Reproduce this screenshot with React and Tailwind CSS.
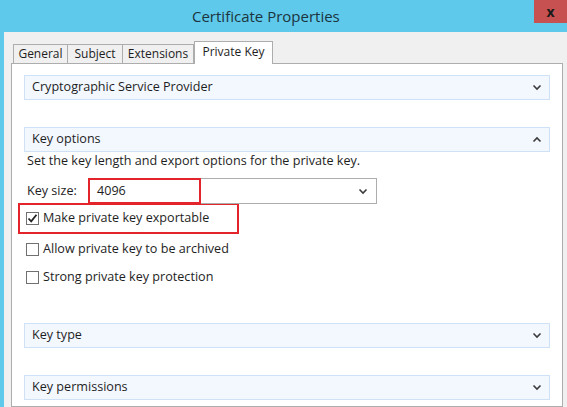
import React from "react";

const font = { fontFamily: '"Open Sans", "Noto Sans", "Liberation Sans", sans-serif' };

function Chevron({ up = false }) {
  return (
    <svg width="10" height="7" viewBox="0 0 10 7" className="shrink-0">
      <path
        d={up ? "M1.5 5.5 L5 2 L8.5 5.5" : "M1.5 1.5 L5 5 L8.5 1.5"}
        fill="none"
        stroke="#3a3a3a"
        strokeWidth="1.6"
      />
    </svg>
  );
}

function Section({ title, up = false }) {
  return (
    <div className="flex h-[25px] items-center justify-between border border-[#cfe1f7] bg-[#f3f8fe] pl-[7px] pr-[7px] text-[12.6px] text-[#1e1e1e]">
      <span>{title}</span>
      <Chevron up={up} />
    </div>
  );
}

function Check({ checked = false, label }) {
  return (
    <div className="flex h-[14px] items-center gap-[4px] text-[12.6px] text-[#1e1e1e]">
      <span className="flex h-[13px] w-[13px] items-center justify-center border border-[#707070] bg-white">
        {checked ? (
          <svg width="11" height="11" viewBox="0 0 11 11">
            <path d="M1.5 5.5 L4.2 8.3 L9.5 1.8" fill="none" stroke="#222" strokeWidth="1.8" />
          </svg>
        ) : null}
      </span>
      <span>{label}</span>
    </div>
  );
}

function Tab({ label, width, active = false }) {
  if (active) {
    return (
      <div
        className={`relative z-10 -mb-px flex h-[23px] items-center justify-center border border-b-0 border-[#adadad] bg-white pb-[2px] text-[12px] text-[#1e1e1e] ${width}`}
      >
        {label}
      </div>
    );
  }
  return (
    <div
      className={`flex h-[19px] items-center justify-center border border-b-0 border-l-0 border-[#adadad] bg-[#f0f0f0] text-[12px] text-[#1e1e1e] first:border-l ${width}`}
    >
      {label}
    </div>
  );
}

export default function App() {
  return (
    <div className="relative flex h-[407px] w-[567px] flex-col overflow-hidden bg-[#5ec9ea]" style={font}>
      <div className="flex h-[32px] shrink-0 items-center pl-[192px] text-[15px] text-[#1c3440]">
        Certificate Properties
      </div>
      <div className="absolute right-0 top-0 flex h-[23px] w-[33px] items-center justify-center bg-[#c75050] text-[14px] font-bold text-[#1a1a1a]">
        x
      </div>

      <div className="ml-[4px] flex flex-1 flex-col bg-[#f0f0f0] pl-[7px] pr-[4px] pt-[9px]">
        <div className="flex items-end pl-[2px]">
          <Tab label="General" width="w-[55px]" />
          <Tab label="Subject" width="w-[55px]" />
          <Tab label="Extensions" width="w-[71px]" />
          <Tab label="Private Key" width="w-[79px]" active />
        </div>

        <div className="flex flex-1 flex-col border border-[#adadad] bg-white px-[12px] pt-[11px]">
          <Section title="Cryptographic Service Provider" />

          <div className="mt-[27px]">
            <Section title="Key options" up />
          </div>

          <div className="mt-[1px] pl-[3px] text-[12.6px] leading-[16px] text-[#1e1e1e]">
            Set the key length and export options for the private key.
          </div>

          <div className="mt-[9px] flex items-center pl-[3px]">
            <span className="w-[61px] text-[12.6px] text-[#1e1e1e]">Key size:</span>
            <div className="relative flex h-[26px] w-[289px] items-center justify-between border border-[#adadad] bg-white pl-[8px] pr-[8px] text-[12.6px] text-[#1e1e1e]">
              <span>4096</span>
              <Chevron />
              <div className="absolute -left-px -top-px h-[26px] w-[113px] border-2 border-[#e3242b]" />
            </div>
          </div>

          <div className="-ml-[6px] mt-[-1px] flex h-[31px] w-[221px] items-center border-2 border-[#e3242b] pl-[6px]">
            <Check checked label="Make private key exportable" />
          </div>

          <div className="mt-[8px] flex flex-col gap-[14px] pl-[2px]">
            <Check label="Allow private key to be archived" />
            <Check label="Strong private key protection" />
          </div>

          <div className="mt-[39px]">
            <Section title="Key type" />
          </div>
          <div className="mt-[27px]">
            <Section title="Key permissions" />
          </div>
        </div>
      </div>
    </div>
  );
}
